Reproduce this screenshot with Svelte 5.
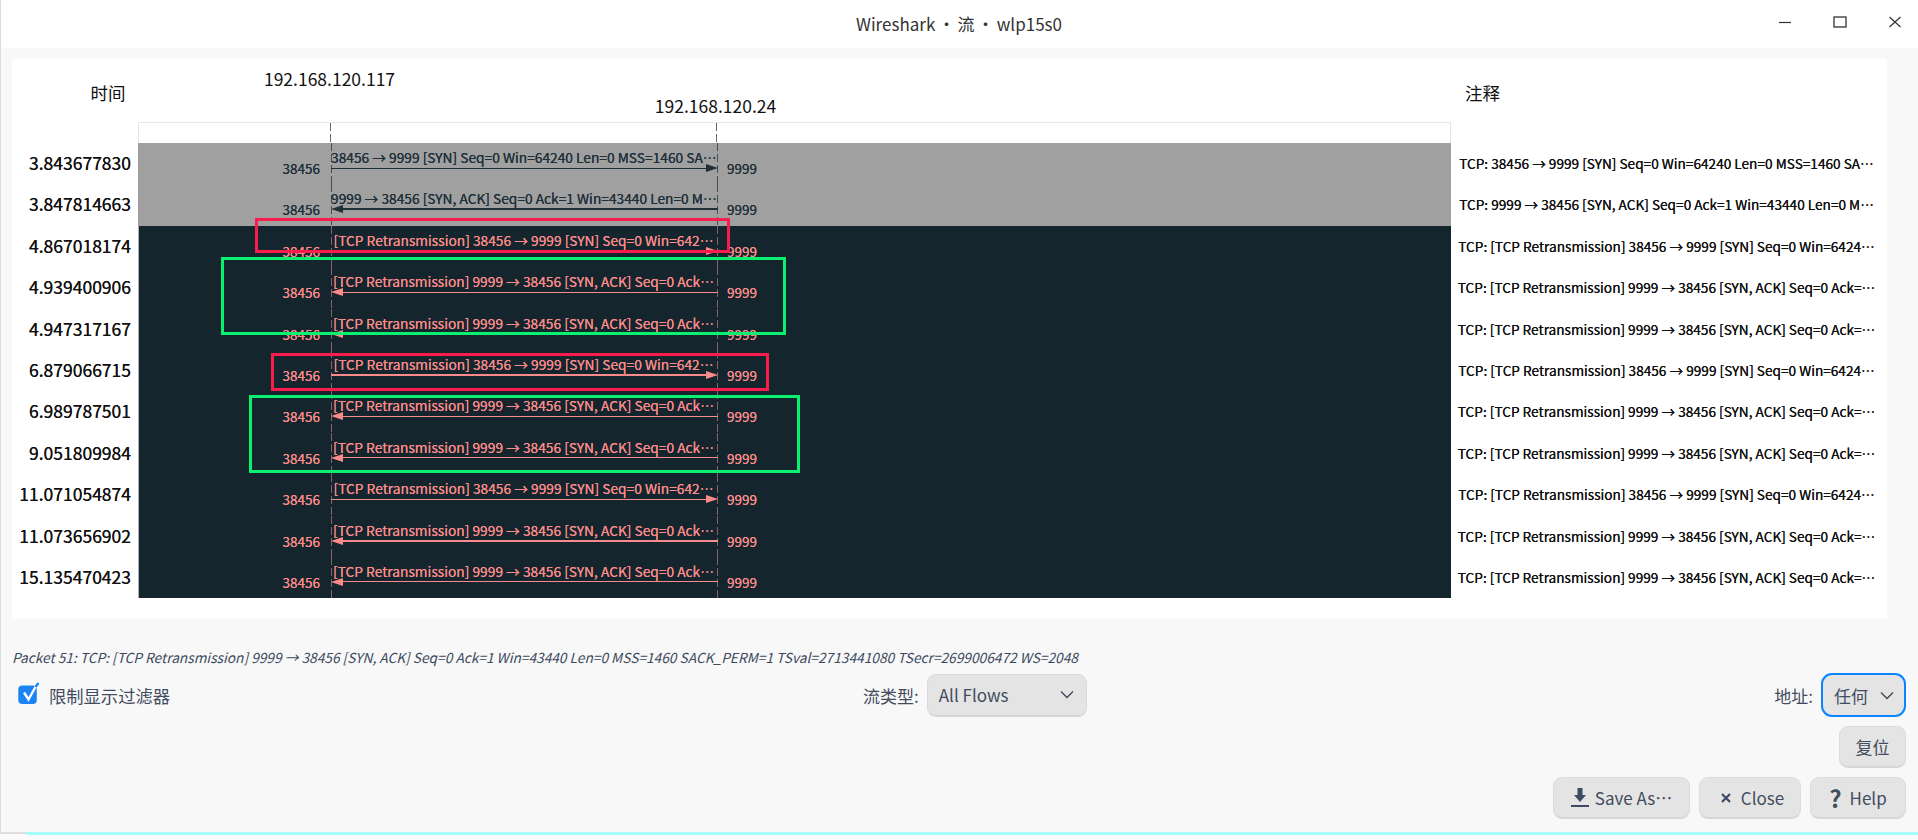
<script>
  const synR = '[TCP Retransmission] 38456 → 9999 [SYN] Seq=0 Win=642…';
  const ackR = '[TCP Retransmission] 9999 → 38456 [SYN, ACK] Seq=0 Ack…';
  const synC = 'TCP: [TCP Retransmission] 38456 → 9999 [SYN] Seq=0 Win=6424…';
  const ackC = 'TCP: [TCP Retransmission] 9999 → 38456 [SYN, ACK] Seq=0 Ack=…';
  const rows = [
    { t: '3.843677830', label: '38456 → 9999 [SYN] Seq=0 Win=64240 Len=0 MSS=1460 SA…', note: 'TCP: 38456 → 9999 [SYN] Seq=0 Win=64240 Len=0 MSS=1460 SA…', dir: 'r', ok: true },
    { t: '3.847814663', label: '9999 → 38456 [SYN, ACK] Seq=0 Ack=1 Win=43440 Len=0 M…', note: 'TCP: 9999 → 38456 [SYN, ACK] Seq=0 Ack=1 Win=43440 Len=0 M…', dir: 'l', ok: true, thick: true },
    { t: '4.867018174', label: synR, note: synC, dir: 'r' },
    { t: '4.939400906', label: ackR, note: ackC, dir: 'l' },
    { t: '4.947317167', label: ackR, note: ackC, dir: 'l' },
    { t: '6.879066715', label: synR, note: synC, dir: 'r', thick: true },
    { t: '6.989787501', label: ackR, note: ackC, dir: 'l' },
    { t: '9.051809984', label: ackR, note: ackC, dir: 'l' },
    { t: '11.071054874', label: synR, note: synC, dir: 'r' },
    { t: '11.073656902', label: ackR, note: ackC, dir: 'l', thick: true },
    { t: '15.135470423', label: ackR, note: ackC, dir: 'l' }
  ];
  const marks = [
    { c: 'red', x: 243, y: 159, w: 475, h: 35 },
    { c: 'green', x: 209, y: 198, w: 565, h: 78 },
    { c: 'red', x: 259, y: 294, w: 498, h: 38 },
    { c: 'green', x: 237, y: 336, w: 551, h: 78 }
  ];
</script>

<div class="window" lang="zh-Hans">
  <header class="titlebar">
    <span class="title">Wireshark · 流 · wlp15s0</span>
    <div class="wm">
      <svg width="14" height="12" viewBox="0 0 14 12"><path d="M1 6.5h12" stroke="#333" stroke-width="1.2" /></svg>
      <svg width="14" height="12" viewBox="0 0 14 12"><rect x="1" y="1" width="12" height="10" fill="none" stroke="#333" stroke-width="1.3" /></svg>
      <svg width="14" height="12" viewBox="0 0 14 12"><path d="M1.5 1l11 10M12.5 1l-11 10" stroke="#333" stroke-width="1.2" fill="none" /></svg>
    </div>
  </header>

  <main class="content">
    <section class="panel">
      <div class="head">
        <div class="h-time">时间</div>
        <div class="h-plot">
          <div class="ip ip-a"><span>192.168.120.117</span></div>
          <div class="ip ip-b"><span>192.168.120.24</span></div>
        </div>
        <div class="h-note">注释</div>
      </div>

      <div class="strip">
        <div class="strip-plot"><div class="strip-flow"></div></div>
      </div>

      {#each rows as r}
        <div class="row">
          <div class="time">{r.t}</div>
          <div class="plot" class:ok={r.ok}>
            <div class="port left">38456</div>
            <div class="flow">
              <div class="label">{r.label}</div>
              <div class="arrow" class:back={r.dir === 'l'} class:thick={r.thick}>
                <i class="line"></i><i class="head-tip"></i>
              </div>
            </div>
            <div class="port right">9999</div>
          </div>
          <div class="note">{r.note}</div>
        </div>
      {/each}

      {#each marks as m}
        <div class="mark {m.c}" style="left:{m.x}px;top:{m.y}px;width:{m.w}px;height:{m.h}px"></div>
      {/each}
    </section>

    <p class="status">Packet 51: TCP: [TCP Retransmission] 9999 → 38456 [SYN, ACK] Seq=0 Ack=1 Win=43440 Len=0 MSS=1460 SACK_PERM=1 TSval=2713441080 TSecr=2699006472 WS=2048</p>

    <div class="filters">
      <label class="check">
        <svg width="21" height="22" viewBox="0 0 21 22">
          <rect x="0.3" y="1.500" width="18.500" height="18.500" rx="4" fill="#1a84f5" />
          <path d="M6 8.500l4.500 7L18 2" fill="none" stroke="#fff" stroke-width="2.400" />
          <path d="M17.500 3L20.500 -1" fill="none" stroke="#1a84f5" stroke-width="2.200" />
        </svg>
        <span>限制显示过滤器</span>
      </label>
      <div class="field">
        <span>流类型:</span>
        <div class="combo wide">
          <span>All Flows</span>
          <svg width="14" height="9" viewBox="0 0 14 9"><path d="M1 1.500l6 6 6-6" fill="none" stroke="#3d4659" stroke-width="1.300" /></svg>
        </div>
      </div>
      <div class="field end">
        <span>地址:</span>
        <div class="combo focus">
          <span>任何</span>
          <svg width="14" height="9" viewBox="0 0 14 9"><path d="M1 1.500l6 6 6-6" fill="none" stroke="#3d4659" stroke-width="1.300" /></svg>
        </div>
      </div>
    </div>

    <div class="reset-row"><button class="btn reset">复位</button></div>

    <div class="actions">
      <button class="btn save">
        <svg width="18" height="19" viewBox="0 0 18 19"><path d="M6.500 0h5v7H15l-6 7-6-7h3.500z" fill="#3d4a63" /><rect y="17" width="18" height="2" fill="#3d4a63" /></svg>
        <span>Save As…</span>
      </button>
      <button class="btn close">
        <svg width="10" height="10" viewBox="0 0 10 10"><path d="M1 1l8 8M9 1l-8 8" stroke="#3d4a63" stroke-width="2.200" /></svg>
        <span>Close</span>
      </button>
      <button class="btn help">
        <b>?</b>
        <span>Help</span>
      </button>
    </div>
  </main>

  <footer class="foot"><i></i></footer>
</div>

<style>
  :global(body) {
    margin: 0;
    background: #f8f8f8;
  }
  .window {
    width: 1918px;
    height: 840px;
    box-sizing: border-box;
    display: flex;
    flex-direction: column;
    background: #f8f8f8;
    font-family: "Noto Sans CJK SC", "Noto Sans", sans-serif;
    font-size: 17px;
    color: #424c5e;
    overflow: hidden;
    box-shadow: inset 1px 0 0 #dcdcdc;
  }
  .titlebar {
    height: 48px;
    flex: none;
    box-sizing: border-box;
    padding-bottom: 2px;
    background: #fff;
    box-shadow: inset 1px 0 0 #dcdcdc;
    display: flex;
    align-items: center;
    justify-content: center;
    position: relative;
    color: #333;
  }
  .title {
    font-size: 17px;
    word-spacing: -1.200px;
  }
  .wm {
    position: absolute;
    right: 16px;
    top: 16px;
    display: flex;
    gap: 41px;
  }
  .wm svg {
    display: block;
  }
  .content {
    flex: 1;
    display: flex;
    flex-direction: column;
    min-height: 0;
  }
  .panel {
    position: relative;
    box-sizing: border-box;
    margin: 11px 0 0 12px;
    width: 1875px;
    height: 560px;
    background: #fff;
    color: #111;
  }
  .head,
  .strip,
  .row {
    display: grid;
    grid-template-columns: 126px 1313px 436px;
  }
  .head {
    height: 63px;
    line-height: 26px;
  }
  .h-time {
    text-align: center;
    padding: 21px 0 0 66px;
    box-sizing: border-box;
    width: 126px;
    font-size: 17.500px;
  }
  .h-note {
    padding: 21px 0 0 14px;
    font-size: 17.500px;
  }
  .h-plot {
    position: relative;
    display: flex;
    font-size: 17.500px;
  }
  .ip {
    width: 0;
    display: flex;
    justify-content: center;
    white-space: nowrap;
  }
  .ip-a {
    margin: 7px 0 0 191.500px;
  }
  .ip-b {
    margin: 34px 0 0 386px;
  }
  .strip {
    height: 21px;
  }
  .strip-plot {
    grid-column: 2;
    box-sizing: border-box;
    border: 1px solid #e6e6e6;
    border-bottom: 0;
    padding-left: 191px;
  }
  .strip-flow {
    width: 387px;
    height: 100%;
    box-sizing: border-box;
    background-image:
      repeating-linear-gradient(#666 0 8px, transparent 8px 11px),
      repeating-linear-gradient(#666 0 8px, transparent 8px 11px);
    background-size: 1px 100%;
    background-position: left top, right top;
    background-repeat: no-repeat;
  }
  .row {
    height: 41.400px;
  }
  .time {
    padding-right: 7px;
    text-align: right;
    font-size: 17.500px;
    line-height: 40px;
    white-space: nowrap;
    text-shadow: 0 0 0.6px currentColor;
  }
  .note {
    font-size: 13.650px;
    line-height: 41px;
    text-align: center;
    white-space: nowrap;
    color: #111;
    padding-right: 5px;
    text-shadow: 0 0 0.6px currentColor;
  }
  .plot {
    --ink: #fb8a8a;
    --dash: #8a6268;
    display: grid;
    grid-template-columns: 192px 387px 1fr;
    background: #15252d;
    color: var(--ink);
    border-left: 1px solid #aab2b8;
    box-sizing: border-box;
  }
  .plot.ok {
    --ink: #1f3039;
    --dash: #445058;
    background: #a0a0a0;
    border-left-color: #a0a0a0;
  }
  .port {
    font-size: 13.500px;
    line-height: 16px;
    padding-top: 17px;
    text-shadow: 0 0 0.6px currentColor;
  }
  .port.left {
    text-align: right;
    padding-right: 11px;
  }
  .port.right {
    padding-left: 9px;
  }
  .flow {
    padding-top: 8px;
    box-sizing: border-box;
    background-image:
      repeating-linear-gradient(var(--dash) 0 8px, transparent 8px 11px),
      repeating-linear-gradient(var(--dash) 0 8px, transparent 8px 11px);
    background-size: 1px 100%;
    background-position: left top, right top;
    background-repeat: no-repeat;
  }
  .label {
    font-size: 13.750px;
    line-height: 12px;
    height: 12px;
    margin-bottom: 1px;
    padding-right: 2px;
    text-align: center;
    white-space: nowrap;
    text-shadow: 0 0 0.6px currentColor;
  }
  .arrow {
    height: 8px;
    display: flex;
    align-items: center;
  }
  .arrow.back {
    flex-direction: row-reverse;
  }
  .line {
    flex: 1;
    height: 1px;
    background: var(--ink);
  }
  .arrow.thick .line {
    height: 2px;
  }
  .head-tip {
    width: 0;
    height: 0;
    border-top: 4.500px solid transparent;
    border-bottom: 4.500px solid transparent;
    border-left: 12px solid var(--ink);
  }
  .arrow.back .head-tip {
    border-left: 0;
    border-right: 12px solid var(--ink);
  }
  .mark {
    position: absolute;
    box-sizing: border-box;
    border: 3px solid;
  }
  .mark.red {
    border-color: #fb1c4e;
  }
  .mark.green {
    border-color: #0cf06f;
  }
  .status {
    margin: 28px 0 0 12px;
    font-size: 13.730px;
    line-height: 20px;
    font-style: italic;
    color: #3c4a5e;
    white-space: nowrap;
  }
  .filters {
    margin-top: 6px;
    height: 44px;
    display: grid;
    grid-template-columns: 845px auto 1fr;
    align-items: center;
    padding: 0 12px 0 18px;
  }
  .check {
    display: flex;
    align-items: center;
    gap: 10px;
    font-size: 17.300px;
  }
  .check svg {
    display: block;
    overflow: visible;
  }
  .field {
    display: flex;
    align-items: center;
    gap: 8px;
  }
  .field.end {
    justify-content: flex-end;
  }
  .combo {
    height: 43px;
    box-sizing: border-box;
    display: flex;
    align-items: center;
    justify-content: space-between;
    padding: 0 12px;
    background: #e4e4e4;
    border: 1px solid #dadada;
    border-bottom: 2px solid #d6d6d6;
    border-radius: 9px;
  }
  .combo.wide {
    width: 160px;
    padding-left: 11px;
  }
  .combo.focus {
    width: 85px;
    height: 44px;
    border: 1.500px solid #fff;
    outline: 2.500px solid #0a84ff;
    outline-offset: -2.500px;
    border-radius: 11px;
    padding: 0 11px 0 12px;
  }
  .btn {
    font: inherit;
    color: inherit;
    height: 42px;
    box-sizing: border-box;
    display: inline-flex;
    align-items: center;
    justify-content: center;
    background: #e4e4e4;
    border: 1px solid #dcdcdc;
    border-bottom: 2px solid #d6d6d6;
    border-radius: 9px;
    padding: 0;
  }
  .btn svg {
    display: block;
    flex: none;
  }
  .reset-row {
    margin-top: 9px;
    padding-right: 12px;
    display: flex;
    justify-content: flex-end;
  }
  .reset {
    width: 67px;
  }
  .actions {
    margin-top: 9px;
    padding-right: 12px;
    display: flex;
    justify-content: flex-end;
    gap: 9px;
  }
  .save {
    width: 137px;
    gap: 6px;
  }
  .close {
    width: 102px;
    gap: 10px;
    padding-left: 5px;
  }
  .help {
    width: 96px;
    gap: 8px;
  }
  .help b {
    font-size: 24px;
    line-height: 1;
  }
  .foot {
    height: 8px;
    flex: none;
    background: #fbfbfb;
    box-shadow: inset 0 2px 0 #dedede;
    padding-left: 26px;
  }
  .foot i {
    display: block;
    height: 3px;
    background: #a6fcfc;
  }
</style>
